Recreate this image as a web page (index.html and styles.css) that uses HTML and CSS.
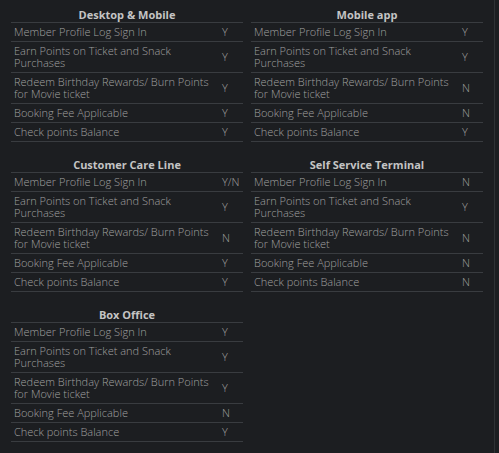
FILE: index.html
```html
<!DOCTYPE html>
<html lang="en">
<head>
<meta charset="utf-8">
<title>Loyalty channels</title>
<link rel="stylesheet" href="styles.css">
</head>
<body>
<div class="page">
  <div class="grid">
    <section class="card">
      <h3 class="card-title">Desktop &amp; Mobile</h3>
      <div class="rows">
        <div class="row"><span class="label">Member Profile Log Sign In</span><span class="val">Y</span></div>
        <div class="row"><span class="label">Earn Points on Ticket and Snack Purchases</span><span class="val">Y</span></div>
        <div class="row"><span class="label">Redeem Birthday Rewards/ Burn Points for Movie ticket</span><span class="val">Y</span></div>
        <div class="row"><span class="label">Booking Fee Applicable</span><span class="val">Y</span></div>
        <div class="row"><span class="label">Check points Balance</span><span class="val">Y</span></div>
      </div>
    </section>
    <section class="card">
      <h3 class="card-title">Mobile app</h3>
      <div class="rows">
        <div class="row"><span class="label">Member Profile Log Sign In</span><span class="val">Y</span></div>
        <div class="row"><span class="label">Earn Points on Ticket and Snack Purchases</span><span class="val">Y</span></div>
        <div class="row"><span class="label">Redeem Birthday Rewards/ Burn Points for Movie ticket</span><span class="val">N</span></div>
        <div class="row"><span class="label">Booking Fee Applicable</span><span class="val">N</span></div>
        <div class="row"><span class="label">Check points Balance</span><span class="val">Y</span></div>
      </div>
    </section>
    <section class="card">
      <h3 class="card-title">Customer Care Line</h3>
      <div class="rows">
        <div class="row"><span class="label">Member Profile Log Sign In</span><span class="val">Y/N</span></div>
        <div class="row"><span class="label">Earn Points on Ticket and Snack Purchases</span><span class="val">Y</span></div>
        <div class="row"><span class="label">Redeem Birthday Rewards/ Burn Points for Movie ticket</span><span class="val">N</span></div>
        <div class="row"><span class="label">Booking Fee Applicable</span><span class="val">Y</span></div>
        <div class="row"><span class="label">Check points Balance</span><span class="val">Y</span></div>
      </div>
    </section>
    <section class="card">
      <h3 class="card-title">Self Service Terminal</h3>
      <div class="rows">
        <div class="row"><span class="label">Member Profile Log Sign In</span><span class="val">N</span></div>
        <div class="row"><span class="label">Earn Points on Ticket and Snack Purchases</span><span class="val">Y</span></div>
        <div class="row"><span class="label">Redeem Birthday Rewards/ Burn Points for Movie ticket</span><span class="val">N</span></div>
        <div class="row"><span class="label">Booking Fee Applicable</span><span class="val">N</span></div>
        <div class="row"><span class="label">Check points Balance</span><span class="val">N</span></div>
      </div>
    </section>
    <section class="card">
      <h3 class="card-title">Box Office</h3>
      <div class="rows">
        <div class="row"><span class="label">Member Profile Log Sign In</span><span class="val">Y</span></div>
        <div class="row"><span class="label">Earn Points on Ticket and Snack Purchases</span><span class="val">Y</span></div>
        <div class="row"><span class="label">Redeem Birthday Rewards/ Burn Points for Movie ticket</span><span class="val">Y</span></div>
        <div class="row"><span class="label">Booking Fee Applicable</span><span class="val">N</span></div>
        <div class="row"><span class="label">Check points Balance</span><span class="val">Y</span></div>
      </div>
    </section>
  </div>
</div>
</body>
</html>
```
FILE: styles.css
```css
html, body {
  margin: 0;
  padding: 0;
  background: #1c1e21;
}
body {
  font-family: "Open Sans", "Noto Sans", "Liberation Sans", sans-serif;
  color: #a0a0a0;
}
.page {
  width: 495px;
  min-height: 453px;
  border-right: 1px solid #2e3235;
  box-sizing: border-box;
}
.grid {
  display: grid;
  grid-template-columns: 232px 232px;
  column-gap: 8px;
  row-gap: 16px;
  padding: 8px 0 0 11px;
  align-items: start;
}
.card-title {
  margin: 0;
  height: 14px;
  line-height: 14px;
  font-size: 11px;
  font-weight: 700;
  text-align: center;
  color: #c4c4c4;
}
.rows {
  border-bottom: 1px solid #393c40;
}
.row {
  display: grid;
  grid-template-columns: 1fr 24px;
  align-items: center;
  border-top: 1px solid #393c40;
  font-size: 11px;
  font-weight: 300;
  line-height: 12px;
}
.label {
  padding: 3px 0 3px 3px;
}
.val {
  padding: 3px 0 3px 3px;
}
```
